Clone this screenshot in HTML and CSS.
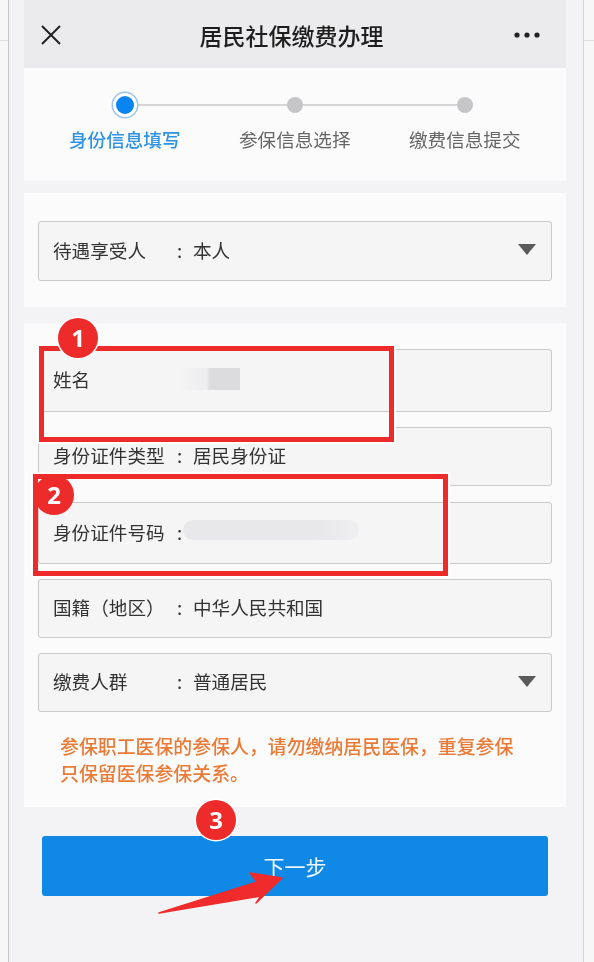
FILE: index.html
```html
<!DOCTYPE html>
<html lang="zh-CN">
<head>
<meta charset="utf-8">
<title>居民社保缴费办理</title>
<link rel="stylesheet" href="styles.css">
</head>
<body>
<div class="page">
  <div class="frame">
    <header class="topbar">
      <svg class="close" viewBox="0 0 20 20" width="20" height="20"><path d="M1 1L19 19M19 1L1 19" fill="none" stroke="#222" stroke-width="2"/></svg>
      <h1 class="title">居民社保缴费办理</h1>
      <svg class="more" viewBox="0 0 26 6" width="26" height="6"><circle cx="3" cy="3" r="2.6" fill="#222"/><circle cx="13" cy="3" r="2.6" fill="#222"/><circle cx="23" cy="3" r="2.6" fill="#222"/></svg>
    </header>

    <section class="card steps">
      <div class="step active"><span class="dot"></span><span class="step-label">身份信息填写</span></div>
      <div class="step"><span class="dot"></span><span class="step-label">参保信息选择</span></div>
      <div class="step"><span class="dot"></span><span class="step-label">缴费信息提交</span></div>
    </section>

    <section class="card who">
      <div class="field h59"><span class="label">待遇享受人</span><span class="colon">:</span><span class="value">本人</span><span class="caret"></span></div>
    </section>

    <section class="card form">
      <div class="field h63"><span class="label">姓名</span></div>
      <div class="field h59 g15"><span class="label">身份证件类型</span><span class="colon">:</span><span class="value">居民身份证</span></div>
      <div class="field h62 g16"><span class="label">身份证件号码</span><span class="colon">:</span></div>
      <div class="field h59 g15"><span class="label">国籍（地区）</span><span class="colon">:</span><span class="value">中华人民共和国</span></div>
      <div class="field h59 g15"><span class="label">缴费人群</span><span class="colon">:</span><span class="value">普通居民</span><span class="caret"></span></div>
      <p class="note">参保职工医保的参保人，请勿缴纳居民医保，重复参保<br>只保留医保参保关系。</p>
    </section>

    <button class="next" type="button">下一步</button>
  </div>

  <div class="blur blur-name"></div>
  <div class="blur blur-id"></div>
  <div class="mark mark-1"></div>
  <div class="mark mark-2"></div>
  <span class="badge badge-1">1</span>
  <span class="badge badge-2">2</span>
  <span class="badge badge-3">3</span>
  <svg class="arrow" viewBox="0 0 130 44" width="130" height="44"><path d="M1 41L99 10L92 1L124 6L98 31L103 24Z" fill="#f02b2b" stroke="#f02b2b" stroke-width="1.5" stroke-linejoin="round"/></svg>
</div>
</body>
</html>
```
FILE: styles.css
```css
* { box-sizing: border-box; }
html, body { margin: 0; padding: 0; }
body {
  background: linear-gradient(#f7f7f7 0 40px, #dedede 40px 41px, #f7f7f7 41px);
  font-family: "Noto Sans CJK SC", "Noto Sans", sans-serif;
  color: #333;
}
.page { position: relative; width: 594px; height: 962px; overflow: hidden; filter: blur(0.35px); }
.frame {
  margin-left: 8px;
  width: 576px;
  height: 962px;
  padding: 0 17px 0 14.5px;
  border-left: 1px solid #c4c4c6;
  border-right: 1px solid #d4d4d6;
  background: #f3f3f5;
}
.topbar {
  height: 68px;
  background: #ebebed;
  display: flex;
  align-items: center;
  justify-content: space-between;
  padding: 0 26px 0 17.5px;
}
.close { margin-top: 1px; }
.more { margin-top: 1px; }
.title { margin: 1px 0 0 8px; font-size: 23px; line-height: 32px; font-weight: 500; color: #1e1e1e; }
.card { background: #fbfbfc; }
.steps {
  height: 113px;
  display: grid;
  grid-template-columns: repeat(3, 170px);
  justify-content: center;
  padding-top: 25px;
}
.step { position: relative; display: flex; flex-direction: column; align-items: center; }
.step:not(:last-child)::after {
  content: "";
  position: absolute;
  left: 50%;
  width: 100%;
  top: 11px;
  height: 2px;
  background: #d6d6d8;
}
.dot {
  position: relative;
  z-index: 1;
  width: 16px;
  height: 16px;
  margin: 4px 0;
  border-radius: 50%;
  background: #c6c6c8;
}
.step-label { margin-top: 8px; font-size: 18.6px; line-height: 28px; color: #666; white-space: nowrap; }
.active .dot {
  width: 24px;
  height: 24px;
  margin: 0;
  background: #0a84f0;
  border: 3px solid #fff;
  box-shadow: 0 0 0 1.5px #9cc4ea;
}
.active .step-label { margin-top: 8px; color: #2f93e4; font-weight: 500; }
.who { margin-top: 12px; height: 114px; padding: 28px 14.5px 0; }
.form { margin-top: 16px; height: 484px; padding: 26px 14.5px 0; }
.field {
  display: flex;
  align-items: center;
  padding: 0 15px 4px 14px;
  border: 1px solid #c9c9cb;
  border-radius: 3px;
  background: #f5f5f6;
  font-size: 18.6px;
  color: #333;
}
.h59 { height: 60px; }
.h62 { height: 62px; }
.h63 { height: 63px; }
.g15 { margin-top: 15px; }
.g16 { margin-top: 16px; }
.form .h59 { height: 59px; }
.label { width: 124px; white-space: nowrap; }
.colon { width: 16px; }
.value { white-space: nowrap; }
.caret {
  margin-left: auto;
  width: 0;
  height: 0;
  border-left: 9px solid transparent;
  border-right: 9px solid transparent;
  border-top: 11px solid #5a5a5c;
  margin-top: 1px;
}
.note {
  margin: 20px 0 0 22px;
  font-size: 18.9px;
  line-height: 27px;
  font-weight: 500;
  color: #ea7a35;
  white-space: nowrap;
}
.next {
  display: block;
  margin: 29px 0 0 18.5px;
  width: 506px;
  height: 60px;
  border: 0;
  border-radius: 3px;
  background: #0f88e6;
  color: #f2f8fd;
  font: 400 21px/30px "Noto Sans CJK SC", "Noto Sans", sans-serif;
}
.blur { position: absolute; }
.blur-name {
  left: 180px; top: 368px; width: 60px; height: 22px;
  background: linear-gradient(90deg, #f5f5f6 0, #ececee 45%, #dcdcde 50%, #dcdcde 100%);
}
.blur-id {
  left: 183px; top: 520px; width: 176px; height: 20px;
  border-radius: 10px;
  background: linear-gradient(90deg, #e8e8ea 0, #e8e8ea 75%, #eeeef0 100%);
}
.mark { position: absolute; border: 5px solid #ee2b2b; box-shadow: 0 0 0 2px #fff; }
.mark-1 {
  left: 39px; top: 346px; width: 355px; height: 96px;
  background: linear-gradient(transparent 0 62px, #fbfbfc 62px);
}
.mark-2 {
  left: 33px; top: 474px; width: 415px; height: 102px;
  background: linear-gradient(#fbfbfc 0 23px, transparent 23px);
}
.badge {
  position: absolute;
  width: 40px;
  height: 40px;
  border-radius: 50%;
  background: #ee2b2b;
  box-shadow: 0 0 0 1.5px #fff;
  color: #fff;
  font: 700 24px/40px "Open Sans", sans-serif;
  text-align: center;
}
.badge-1 { left: 58px; top: 318px; }
.badge-2 { left: 34px; top: 475px; box-shadow: none; }
.badge-3 { left: 196px; top: 800px; }
.arrow { position: absolute; left: 158px; top: 872px; }
```
